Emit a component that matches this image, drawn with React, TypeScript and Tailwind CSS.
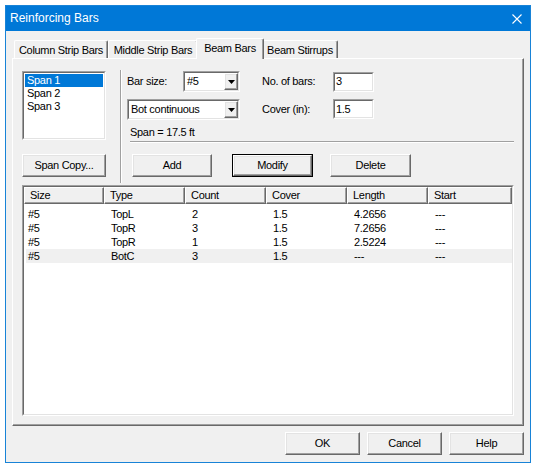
import React from "react";

function Raised({ className = "", children }: { className?: string; children?: React.ReactNode }) {
  return (
    <div
      className={`flex items-center justify-center bg-[#f0f0f0] border-t border-l border-r border-b border-t-white border-l-white border-r-[#696969] border-b-[#696969] shadow-[inset_-1px_-1px_0_#a0a0a0,inset_1px_1px_0_#e3e3e3] ${className}`}
    >
      {children}
    </div>
  );
}

function Sunken({ className = "", children, inner = "" }: { className?: string; children?: React.ReactNode; inner?: string }) {
  return (
    <div className={`border-t border-l border-r border-b border-t-[#a0a0a0] border-l-[#a0a0a0] border-r-white border-b-white ${className}`}>
      <div className={`h-full w-full border-t border-l border-r border-b border-t-[#696969] border-l-[#696969] border-r-[#e3e3e3] border-b-[#e3e3e3] bg-white ${inner}`}>
        {children}
      </div>
    </div>
  );
}

function Combo({ className = "", text }: { className?: string; text: string }) {
  return (
    <Sunken className={className} inner="flex items-center">
      <span className="flex-1 pl-[2px] whitespace-nowrap">{text}</span>
      <Raised className="w-[14px] h-full">
        <svg width="7" height="4" viewBox="0 0 7 4">
          <path d="M0 0H7L3.5 4Z" fill="#000" />
        </svg>
      </Raised>
    </Sunken>
  );
}

function Tab({ label, selected = false, w }: { label: string; selected?: boolean; w: string }) {
  if (selected) {
    return (
      <div
        className={`${w} h-[21px] -mb-[1px] -mx-[2px] relative z-10 bg-[#f0f0f0] border-t border-l border-r border-t-white border-l-white border-r-[#696969] shadow-[inset_-1px_0_0_#a0a0a0] rounded-t-[2px] flex items-start justify-center pt-[3px]`}
      >
        {label}
      </div>
    );
  }
  return (
    <div
      className={`${w} h-[18px] bg-[#f0f0f0] border-t border-l border-r border-t-white border-l-white border-r-[#696969] shadow-[inset_-1px_0_0_#a0a0a0] rounded-t-[2px] flex items-start justify-center pt-[3px]`}
    >
      {label}
    </div>
  );
}

const rows = [
  ["#5", "TopL", "2", "1.5", "4.2656", "---"],
  ["#5", "TopR", "3", "1.5", "7.2656", "---"],
  ["#5", "TopR", "1", "1.5", "2.5224", "---"],
  ["#5", "BotC", "3", "1.5", "---", "---"],
];

const headers = ["Size", "Type", "Count", "Cover", "Length", "Start"];
const headW = ["w-[80px]", "w-[81px]", "w-[81px]", "w-[81px]", "w-[81px]", "w-[84px]"];
const cellW = ["w-[78px] pl-[2px]", "w-[81px] pl-[7px]", "w-[81px] pl-[7px]", "w-[81px] pl-[7px]", "w-[81px] pl-[7px]", "w-[82px] pl-[7px]"];

export default function App() {
  return (
    <div className="w-[536px] h-[468px] bg-white pl-[5px] pt-[5px] font-['Liberation_Sans',Arial,sans-serif] text-[11px] leading-[13px] tracking-[-0.3px] text-black">
      <div className="w-[526px] h-[458px] border border-[#1883d7] bg-[#f0f0f0] flex flex-col">
        {/* Title bar */}
        <div className="h-[25px] shrink-0 bg-[#0078d7] flex items-center justify-between pl-[4px] pr-[8px] text-white text-[12px] tracking-normal">
          <span>Reinforcing Bars</span>
          <svg width="10" height="10" viewBox="0 0 10 10">
            <path d="M0.5 0.5L9.5 9.5M9.5 0.5L0.5 9.5" stroke="#fff" strokeWidth="1.1" />
          </svg>
        </div>

        {/* Tabs */}
        <div className="mt-[7px] h-[20px] mx-[6px] pl-[2px] flex items-end relative z-10">
          <Tab label="Column Strip Bars" w="w-[94px]" />
          <Tab label="Middle Strip Bars" w="w-[90px]" />
          <Tab label="Beam Bars" w="w-[68px]" selected />
          <Tab label="Beam Stirrups" w="w-[76px]" />
        </div>

        {/* Panel */}
        <div className="mx-[6px] h-[368px] shrink-0 border-t border-l border-r border-b border-t-white border-l-white border-r-[#696969] border-b-[#696969] shadow-[inset_-1px_-1px_0_#a0a0a0] pl-[9px] pt-[12px] flex flex-col">
          <div className="flex items-start">
            {/* Left column */}
            <div className="w-[84px] flex flex-col">
              <Sunken className="h-[69px]" inner="p-[1px]">
                <div className="h-[13px] bg-[#0078d7] text-white pl-[2px]">Span 1</div>
                <div className="h-[13px] pl-[2px]">Span 2</div>
                <div className="h-[13px] pl-[2px]">Span 3</div>
              </Sunken>
              <Raised className="mt-[14px] h-[23px]">Span Copy...</Raised>
            </div>

            {/* Vertical separator */}
            <div className="ml-[14px] -mt-[1px] h-[113px] w-[2px] border-l border-l-[#a0a0a0] border-r border-r-white" />

            {/* Right column */}
            <div className="flex flex-col">
              <div className="h-[21px] flex items-center">
                <span className="ml-[5px] w-[56px]">Bar size:</span>
                <Combo className="w-[57px] h-[21px]" text="#5" />
                <span className="ml-[22px] w-[71px]">No. of bars:</span>
                <Sunken className="w-[41px] h-[20px]" inner="flex items-center pl-[1px]">3</Sunken>
              </div>
              <div className="mt-[7px] h-[21px] flex items-center">
                <Combo className="ml-[5px] w-[113px] h-[21px]" text="Bot continuous" />
                <span className="ml-[22px] w-[71px]">Cover (in):</span>
                <Sunken className="w-[41px] h-[20px] self-start" inner="flex items-center pl-[1px]">1.5</Sunken>
              </div>
              <div className="ml-[8px] mt-[6px] h-[13px]">Span = 17.5 ft</div>
              <div className="ml-[8px] mt-[2px] w-[384px] h-[2px] border-t border-t-[#a0a0a0] border-b border-b-white" />
              <div className="mt-[11px] flex">
                <Raised className="ml-[10px] w-[80px] h-[23px]">Add</Raised>
                <div className="ml-[20px] w-[81px] h-[23px] border border-black">
                  <Raised className="w-full h-full">Modify</Raised>
                </div>
                <Raised className="ml-[17px] w-[81px] h-[23px]">Delete</Raised>
              </div>
            </div>
          </div>

          {/* Table */}
          <Sunken className="mt-[2px] w-[492px] h-[231px]" inner="flex flex-col">
            <div className="flex h-[17px] shrink-0">
              {headers.map((h, i) => (
                <div
                  key={h}
                  className={`${headW[i]} h-full bg-[#f0f0f0] border-t border-l border-r border-b border-t-white border-l-white border-r-[#696969] border-b-[#696969] shadow-[inset_-1px_-1px_0_#a0a0a0] flex items-center pl-[5px]`}
                >
                  {h}
                </div>
              ))}
            </div>
            <div className="mt-[3px] flex flex-col">
              {rows.map((r, ri) => (
                <div key={ri} className={`ml-[2px] w-[486px] h-[14px] flex items-center ${ri === 3 ? "bg-[#f0f0f0]" : ""}`}>
                  {r.map((c, ci) => (
                    <div key={ci} className={`${cellW[ci]}`}>
                      {c}
                    </div>
                  ))}
                </div>
              ))}
            </div>
          </Sunken>
        </div>

        {/* Bottom buttons */}
        <div className="mt-[6px] mx-[6px] flex justify-end gap-[7px]">
          <Raised className="w-[75px] h-[23px]">OK</Raised>
          <Raised className="w-[75px] h-[23px]">Cancel</Raised>
          <Raised className="w-[75px] h-[23px]">Help</Raised>
        </div>
      </div>
    </div>
  );
}
